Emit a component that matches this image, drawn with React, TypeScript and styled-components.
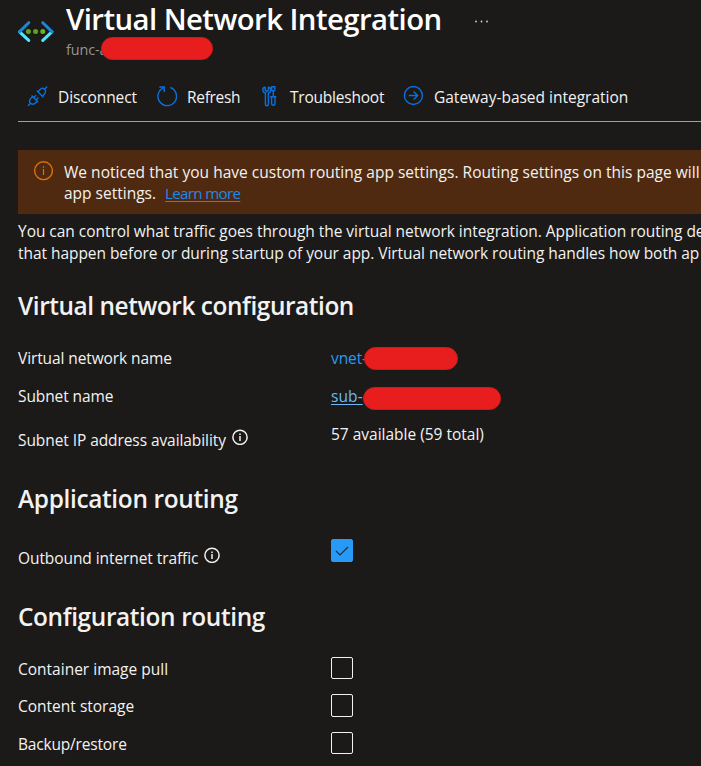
import React from "react";
import styled, { createGlobalStyle } from "styled-components";

const GlobalStyle = createGlobalStyle`
  * { box-sizing: border-box; }
  html, body { margin: 0; background: #1b1a19; overflow: hidden; }
  body { font-family: "Open Sans", "Noto Sans", sans-serif; color: #f3f2f1; }
  h1, h2 { margin: 0; font-weight: 600; }
`;

const Page = styled.main`
  width: 701px;
  height: 766px;
  padding-left: 18px;
  overflow: hidden;
  background: #1b1a19;
  font-size: 15.5px;
  line-height: 22px;
  white-space: nowrap;
`;

const Txt = styled.span<{ $ls?: number }>`
  letter-spacing: ${(p) => p.$ls ?? -0.1}px;
`;

const Header = styled.header`
  display: flex;
  height: 72px;
`;

const HeaderIcon = styled.svg`
  width: 36px;
  height: 22px;
  margin: 21px 12px 0 0;
  flex: none;
`;

const Title = styled.h1`
  height: 40px;
  font-size: 29.3px;
  line-height: 38px;
  letter-spacing: -0.55px;
  color: #fff;
`;

const Subtitle = styled.div`
  position: relative;
  font-size: 14.4px;
  line-height: 20px;
  letter-spacing: -0.1px;
  color: #979593;
`;

const More = styled.svg`
  width: 16px;
  height: 4px;
  margin: 20px 0 0 31px;
`;

const Redaction = styled.span<{ $left: number; $top: number; $width: number }>`
  position: absolute;
  left: ${(p) => p.$left}px;
  top: ${(p) => p.$top}px;
  width: ${(p) => p.$width}px;
  height: 23px;
  border-radius: 12px;
  border: 1px solid #c91d1b;
  background: #e71e1d;
`;

const Toolbar = styled.nav`
  display: flex;
  align-items: flex-start;
  height: 50px;
  padding: 14px 0 0 9px;
  border-bottom: 1px solid #a19f9d;
`;

const Command = styled.div<{ $width: number }>`
  display: flex;
  width: ${(p) => p.$width}px;
  flex: none;
`;

const CommandIcon = styled.svg<{ $gap: number }>`
  width: 21px;
  height: 21px;
  margin-right: ${(p) => p.$gap}px;
  flex: none;
  fill: none;
  stroke: #0a70dc;
  stroke-width: 1.4;
`;

const Banner = styled.section`
  display: flex;
  height: 64px;
  margin-top: 28px;
  padding: 12px 0 0 15px;
  background: #4f2a10;
  line-height: 21px;
`;

const BannerIcon = styled.svg`
  width: 20px;
  height: 20px;
  margin: -1px 11px 0 0;
  flex: none;
`;

const Link = styled.a`
  margin-left: 9px;
  font-size: 15.2px;
  letter-spacing: -0.7px;
  color: #2088e8;
  text-decoration: underline;
  text-decoration-thickness: 1px;
  text-underline-offset: 2px;
`;

const Intro = styled.div`
  height: 75px;
  padding-top: 6px;
`;

const Section = styled.section<{ $height: number }>`
  height: ${(p) => p.$height}px;
`;

const Heading = styled.h2<{ $ls: number; $height: number }>`
  height: ${(p) => p.$height}px;
  font-size: 24.4px;
  line-height: 34px;
  letter-spacing: ${(p) => p.$ls}px;
`;

const Row = styled.div<{ $height: number }>`
  display: grid;
  grid-template-columns: 313px 1fr;
  height: ${(p) => p.$height}px;
`;

const Label = styled.div<{ $drop?: number }>`
  display: flex;
  padding-top: ${(p) => p.$drop ?? 0}px;
`;

const tones = { plain: "inherit", link: "#2899f5", hover: "#6cb8f6" };

const Value = styled.div<{ $tone?: keyof typeof tones }>`
  position: relative;
  color: ${(p) => tones[p.$tone ?? "plain"]};
  text-decoration: ${(p) => (p.$tone === "hover" ? "underline" : "none")};
  text-decoration-thickness: 1px;
  text-underline-offset: 2px;
`;

const InfoSvg = styled.svg`
  width: 16px;
  height: 16px;
  margin-left: 6px;
  flex: none;
`;

const Box = styled.span<{ $height: number; $checked?: boolean }>`
  display: block;
  width: 22px;
  height: ${(p) => p.$height}px;
  border: 1px solid ${(p) => (p.$checked ? "#2899f5" : "#f3f2f1")};
  border-radius: 2px;
  background: ${(p) => (p.$checked ? "#2899f5" : "transparent")};
`;

const CheckMark = styled.svg`
  display: block;
  width: 20px;
  height: 21px;
`;

const Info = () => (
  <InfoSvg viewBox="0 0 16 16" fill="none">
    <circle cx="8" cy="8.3" r="7.1" stroke="#f3f2f1" strokeWidth="1.5" />
    <path d="M8 7V12M8 4.4V6" stroke="#f3f2f1" strokeWidth="1.5" />
  </InfoSvg>
);

const Check = ({ checked, height = 22 }: { checked?: boolean; height?: number }) => (
  <Box $checked={checked} $height={height}>
    {checked && (
      <CheckMark viewBox="0 0 20 21" fill="none">
        <path d="M4 11L8 15L16 7" stroke="#14324d" strokeWidth="1.2" />
      </CheckMark>
    )}
  </Box>
);

const configRows = [
  { label: "Container image pull", ls: 0, height: 37, box: 22 },
  { label: "Content storage", ls: 0, height: 38, box: 23 },
  { label: "Backup/restore", ls: -0.18, height: 30, box: 22 },
];

export default function App() {
  return (
    <>
      <GlobalStyle />
      <Page>
        <Header>
          <HeaderIcon viewBox="0 0 36 22" fill="none">
            <path d="M1.6 10.8L10.7 19.4M33.9 10.8L24.8 19.4" stroke="#50e6ff" strokeWidth="3" strokeLinecap="round" />
            <path d="M10.7 1.7L1.6 10.6M24.8 1.7L33.9 10.6" stroke="#1988d9" strokeWidth="3" strokeLinecap="round" />
            <circle cx="10.4" cy="10.5" r="2.5" fill="#5ea01f" />
            <circle cx="17.6" cy="10.5" r="2.5" fill="#5ea01f" />
            <circle cx="24.8" cy="10.5" r="2.5" fill="#6fb01f" />
          </HeaderIcon>
          <div>
            <Title>Virtual Network Integration</Title>
            <Subtitle>
              func-a
              <Redaction $left={35} $top={-3} $width={112} />
            </Subtitle>
          </div>
          <More viewBox="0 0 16 4" fill="#d2d0ce">
            <circle cx="3" cy="1.5" r="0.9" />
            <circle cx="8.5" cy="1.5" r="0.9" />
            <circle cx="14" cy="1.5" r="0.9" />
          </More>
        </Header>

        <Toolbar>
          <Command $width={129}>
            <CommandIcon $gap={10} viewBox="0 0 21 21">
              <path d="M1 19.8L3.6 17.2M17.6 3.2L20.2 .6" />
              <path d="M4.6 9.4L11.2 16.2M5.6 10.4L3.8 12.4C2.2 14.1 2.3 15.9 3.6 17.2S6.8 18.6 8.4 17L10.2 15.2" />
              <path d="M9.9 4.8L16.3 11.3M10.9 5.8L12.8 3.7C14.4 2.1 16.3 1.9 17.6 3.2S18.8 6.6 17.2 8.2L15.3 10.3" />
              <path d="M6.8 11.6L9.2 9.2M9 13.9L11.4 11.5" />
            </CommandIcon>
            <Txt $ls={-0.1}>Disconnect</Txt>
          </Command>
          <Command $width={103}>
            <CommandIcon $gap={10} viewBox="-0.5 0 21 21">
              <path d="M13.8 1.5A9.3 9.3 0 1 1 6.9 1.8" />
              <path d="M2.8 1H7.8V6" />
            </CommandIcon>
            <Txt $ls={-0.3}>Refresh</Txt>
          </Command>
          <Command $width={144}>
            <CommandIcon $gap={10} viewBox="-4 0 21 21">
              <path d="M2.2 1V4.2L3.7 5.5L5.3 4.2V1M2.2 1A3 3 0 0 0 2.4 6.9V18.2A1.5 1.5 0 0 0 5.4 18.2V6.9A3 3 0 0 0 5.3 1" />
              <path d="M8.7 .8H11.8V4L10.3 5.5L8.7 4ZM10.3 5.5V10.8M7.2 10.8H13.3M8.6 10.8V18A1.8 1.8 0 0 0 12 18V10.8" />
            </CommandIcon>
            <Txt $ls={-0.22}>Troubleshoot</Txt>
          </Command>
          <Command $width={230}>
            <CommandIcon $gap={10} viewBox="0 0 21 21">
              <circle cx="10.4" cy="9.5" r="9" />
              <path d="M5.8 9.5H14.4M10.6 5.4L14.7 9.5L10.6 13.6" />
            </CommandIcon>
            <Txt $ls={-0.01}>Gateway-based integration</Txt>
          </Command>
        </Toolbar>

        <Banner>
          <BannerIcon viewBox="0 0 20 20" fill="none">
            <circle cx="10.5" cy="9.7" r="8.9" stroke="#df6f08" strokeWidth="1.4" />
            <path d="M10.5 8V14M10.5 5.2V6.7" stroke="#df6f08" strokeWidth="1.2" />
          </BannerIcon>
          <div>
            <Txt $ls={0.02}>We noticed that you have custom routing app settings. Routing settings on this page will</Txt>
            <br />
            <Txt $ls={0}>app settings.</Txt>
            <Link>Learn more</Link>
          </div>
        </Banner>

        <Intro>
          <Txt $ls={-0.04}>You can control what traffic goes through the virtual network integration. Application routing de</Txt>
          <br />
          <Txt $ls={-0.05}>that happen before or during startup of your app. Virtual network routing handles how both ap</Txt>
        </Intro>

        <Section $height={193}>
          <Heading $ls={-0.43} $height={58}>Virtual network configuration</Heading>
          <Row $height={38}>
            <Label><Txt>Virtual network name</Txt></Label>
            <Value $tone="link">
              <Txt>vnet-</Txt>
              <Redaction $left={33} $top={0} $width={94} />
            </Value>
          </Row>
          <Row $height={38}>
            <Label><Txt>Subnet name</Txt></Label>
            <Value $tone="hover">
              <Txt $ls={0.1}>sub-</Txt>
              <Redaction $left={32} $top={2} $width={138} />
            </Value>
          </Row>
          <Row $height={38}>
            <Label $drop={6}>
              <Txt $ls={-0.08}>Subnet IP address availability</Txt>
              <Info />
            </Label>
            <Value><Txt $ls={-0.01}>57 available (59 total)</Txt></Value>
          </Row>
        </Section>

        <Section $height={118}>
          <Heading $ls={-0.33} $height={57}>Application routing</Heading>
          <Row $height={38}>
            <Label $drop={8}>
              <Txt $ls={-0.08}>Outbound internet traffic</Txt>
              <Info />
            </Label>
            <Check checked height={23} />
          </Row>
        </Section>

        <Section $height={160}>
          <Heading $ls={-0.37} $height={57}>Configuration routing</Heading>
          {configRows.map((row) => (
            <Row key={row.label} $height={row.height}>
              <Label $drop={1}><Txt $ls={row.ls}>{row.label}</Txt></Label>
              <Check height={row.box} />
            </Row>
          ))}
        </Section>
      </Page>
    </>
  );
}
